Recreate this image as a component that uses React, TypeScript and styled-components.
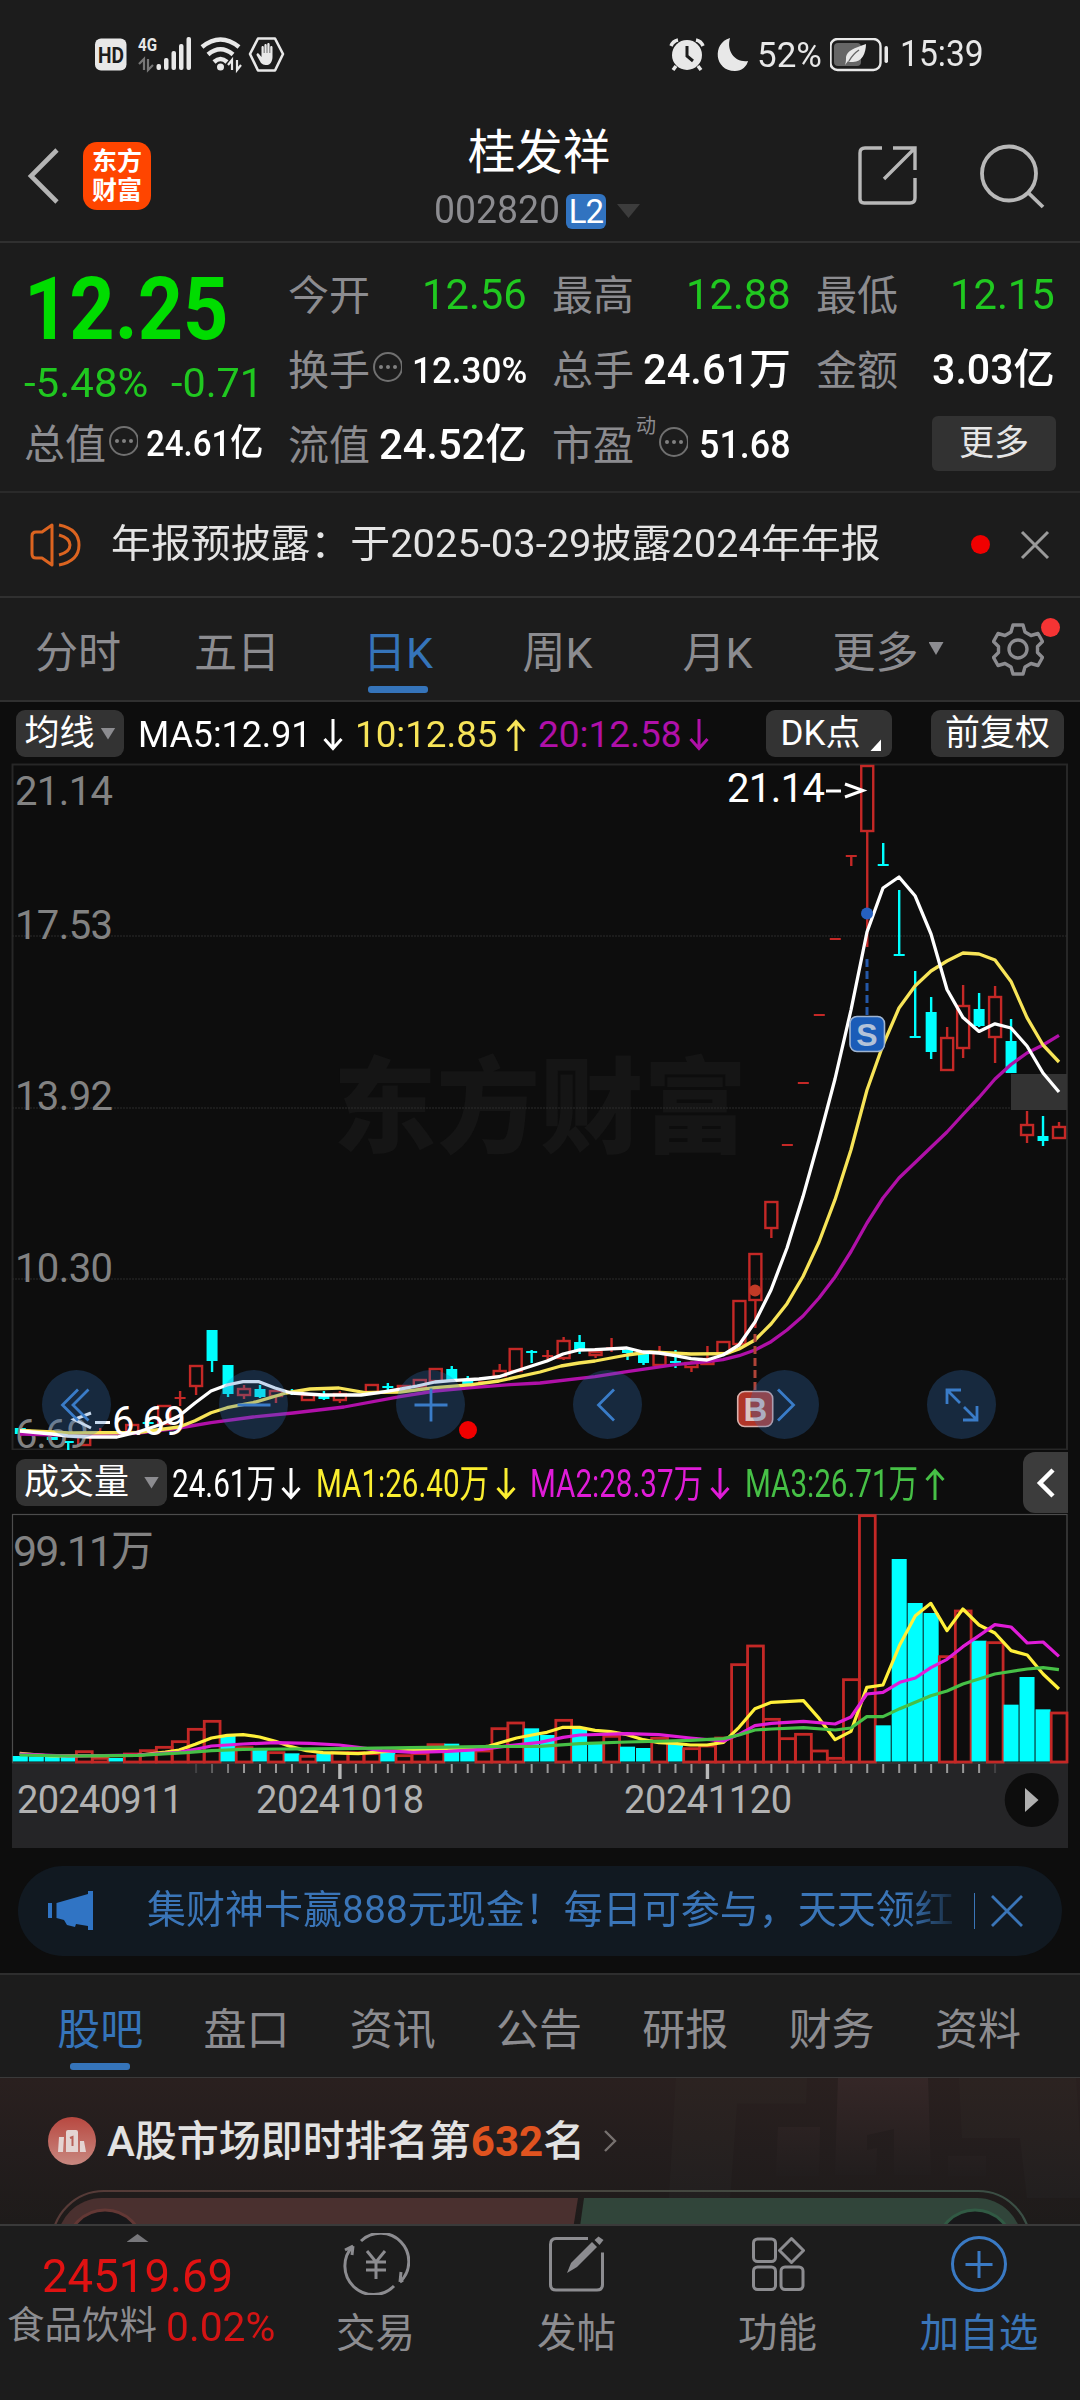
import React, { useLayoutEffect, useRef, useState } from "react";
import styled, { createGlobalStyle } from "styled-components";

const GlobalStyle = createGlobalStyle`
  * { box-sizing: border-box; }
  body {
    margin: 0;
    background: #1c1c1c;
    font-family: Roboto, "Noto Sans CJK SC", sans-serif;
    color: #fff;
  }
  svg { display: block; flex: none; }
`;

const GRAY = "#8c8c90";
const BLUE = "#3574ba";
const RED = "#c42826";
const CYAN = "#00ffff";

/* ---------- shared text ---------- */

const FitBox = styled.span<{ $w: number; $size: number; $color: string; $weight: number }>`
  display: block;
  flex: none;
  width: ${(p) => p.$w}px;
  font-size: ${(p) => p.$size}px;
  line-height: 1.15;
  color: ${(p) => p.$color};
  font-weight: ${(p) => p.$weight};
  white-space: nowrap;
`;
const FitInner = styled.span`
  display: inline-block;
  transform-origin: left center;
`;

function Fit({ w, size, color = "#fff", weight = 400, children }: {
  w: number; size: number; color?: string; weight?: number; children: React.ReactNode;
}) {
  const ref = useRef<HTMLSpanElement>(null);
  const [scale, setScale] = useState(1);
  useLayoutEffect(() => {
    if (ref.current) setScale(w / ref.current.offsetWidth);
  }, [w]);
  return (
    <FitBox $w={w} $size={size} $color={color} $weight={weight}>
      <FitInner ref={ref} style={{ transform: `scaleX(${scale})` }}>{children}</FitInner>
    </FitBox>
  );
}

const Triangle = styled.i<{ $w: number; $h: number; $color: string; $up?: boolean }>`
  width: ${(p) => p.$w}px;
  height: ${(p) => p.$h}px;
  flex: none;
  background: ${(p) => p.$color};
  clip-path: ${(p) => (p.$up ? "polygon(0 100%, 100% 100%, 50% 0)" : "polygon(0 0, 100% 0, 50% 100%)")};
`;

/* ---------- page ---------- */

const Page = styled.div`
  width: 1080px;
  height: 2400px;
  display: flex;
  flex-direction: column;
  overflow: hidden;
  background: #1c1c1c;
`;

/* ---------- status bar ---------- */

const StatusBar = styled.div`
  height: 111px;
  display: flex;
  justify-content: space-between;
  padding: 0 96px 1px 94px;
`;
const StatusGroup = styled.div`
  display: flex;
  align-items: center;
  gap: 8px;
`;
const Clock = styled.div`
  margin-left: 3px;
`;

/* ---------- header ---------- */

const Header = styled.header`
  height: 132px;
  display: grid;
  grid-template-columns: 434px 210px 1fr;
  border-bottom: 2px solid #303030;
`;
const HeaderLeft = styled.div`
  display: flex;
  align-items: center;
  padding: 0 0 1px 25px;
  gap: 23px;
`;
const Logo = styled.div`
  width: 68px;
  height: 68px;
  border-radius: 14px;
  background: #ff4500;
  display: flex;
  flex-direction: column;
  align-items: center;
  justify-content: center;
  font-size: 25px;
  line-height: 29px;
  font-weight: 700;
`;
const HeaderTitle = styled.div`
  display: flex;
  flex-direction: column;
  align-items: center;
  padding-top: 13px;
`;
const StockName = styled.div`
  font-size: 47.5px;
  line-height: 58px;
`;
const CodeRow = styled.div`
  display: flex;
  align-items: center;
  width: 210px;
  height: 48px;
  margin-top: 5px;
`;
const LevelBadge = styled.span`
  width: 40px;
  height: 35px;
  margin: 0 11px 0 6px;
  border-radius: 6px;
  background: #3173c0;
  font-size: 33px;
  line-height: 36px;
  text-align: center;
  letter-spacing: -1px;
`;
const HeaderRight = styled.div`
  display: flex;
  align-items: center;
  justify-content: flex-end;
  padding: 0 35px 1px 0;
  gap: 62px;
`;

/* ---------- quote ---------- */

const Quote = styled.section`
  height: 250px;
  display: grid;
  grid-template-columns: repeat(4, 239px);
  column-gap: 25px;
  padding: 15px 23px 0 24px;
  border-bottom: 2px solid #2a2a2a;
`;
const QuoteColumn = styled.div`
  display: flex;
  flex-direction: column;
`;
const QuoteCell = styled.div<{ $h?: number }>`
  height: ${(p) => p.$h ?? 75}px;
  display: flex;
  align-items: center;
  justify-content: space-between;
`;
const LabelBox = styled.div`
  display: flex;
  align-items: center;
  font-size: 41px;
  line-height: 48px;
  color: ${GRAY};
`;
const Sup = styled.sup`
  align-self: flex-start;
  margin-top: -6px;
  margin-left: 2px;
  font-size: 20px;
  line-height: 20px;
`;
const MoreButton = styled.div`
  width: 124px;
  height: 55px;
  margin: -5px -1px 0 auto;
  border-radius: 6px;
  background: #323232;
  color: #e6e6e6;
  font-size: 35px;
  line-height: 55px;
  text-align: center;
`;

function Dots() {
  return (
    <svg width="32" height="38" viewBox="0 0 32 38">
      <circle cx="18" cy="15" r="14" fill="none" stroke="#707070" strokeWidth="2" />
      {[11, 18, 25].map((x) => <circle key={x} cx={x} cy="15" r="2" fill="#808080" />)}
    </svg>
  );
}

function Cell({ label, value, w, size = 42.5, color = "#fff", weight = 500, dots, sup }: {
  label: string; value: string; w: number; size?: number; color?: string; weight?: number; dots?: boolean; sup?: string;
}) {
  return (
    <QuoteCell>
      <LabelBox>{label}{sup && <Sup>{sup}</Sup>}{dots && <Dots />}</LabelBox>
      <Fit w={w} size={size} color={color} weight={weight}>{value}</Fit>
    </QuoteCell>
  );
}

/* ---------- notice ---------- */

const Notice = styled.section`
  height: 105px;
  display: flex;
  align-items: center;
  padding: 0 30px 0 30px;
  border-bottom: 2px solid #303030;
`;
const NoticeText = styled.div`
  margin: 0 auto 0 30px;
`;
const CloseIcon = styled.svg<{ $gap: number }>`
  margin-left: ${(p) => p.$gap}px;
`;
const Dot = styled.i<{ $size: number; $color: string }>`
  width: ${(p) => p.$size}px;
  height: ${(p) => p.$size}px;
  border-radius: 50%;
  background: ${(p) => p.$color};
`;

/* ---------- tab bars ---------- */

const PeriodTabs = styled.nav`
  height: 104px;
  display: flex;
  align-items: center;
  border-bottom: 2px solid #303030;
`;
const Tab = styled.div<{ $w: number; $active?: boolean; $gap?: number }>`
  position: relative;
  width: ${(p) => p.$w}px;
  height: 100%;
  display: flex;
  align-items: center;
  justify-content: center;
  gap: ${(p) => p.$gap ?? 9}px;
  font-size: 43px;
  color: ${(p) => (p.$active ? BLUE : GRAY)};
  padding-bottom: 1px;
  &::after {
    content: "";
    display: ${(p) => (p.$active ? "block" : "none")};
    position: absolute;
    left: calc(50% - 30px);
    bottom: 7px;
    width: 60px;
    height: 7px;
    border-radius: 3px;
    background: ${BLUE};
  }
`;
const GearBox = styled.div`
  position: relative;
  margin-left: 14px;
`;
const GearDot = styled(Dot)`
  position: absolute;
  right: -16px;
  top: -4px;
`;

/* ---------- chart area ---------- */

const ChartArea = styled.section`
  height: 1271px;
  background: #0d0d0d;
  display: flex;
  flex-direction: column;
`;
const IndicatorRow = styled.div`
  height: 61px;
  display: flex;
  align-items: center;
  padding: 2px 16px 0 16px;
`;
const Chip = styled.div<{ $w: number; $gap?: number; $left?: number }>`
  width: ${(p) => p.$w}px;
  height: 47px;
  flex: none;
  margin-left: ${(p) => p.$left ?? 0}px;
  display: flex;
  align-items: center;
  justify-content: center;
  gap: ${(p) => p.$gap ?? 6}px;
  border-radius: 9px;
  background: #333;
  font-size: 35px;
  line-height: 48px;
  white-space: nowrap;
`;
const Corner = styled.i`
  align-self: flex-end;
  width: 11px;
  height: 12px;
  margin: 0 -4px 6px 0;
  background: #fff;
  clip-path: polygon(100% 0, 100% 100%, 0 100%);
`;
const Readings = styled.div<{ $pad: number; $gap: number }>`
  display: flex;
  align-items: center;
  padding: 3px 0 0 ${(p) => p.$pad}px;
  gap: ${(p) => p.$gap}px;
  flex: 1;
`;
const Reading = styled.div<{ $gap: number }>`
  display: flex;
  align-items: center;
  gap: ${(p) => p.$gap}px;
`;
const VolumeRow = styled.div`
  height: 63px;
  display: flex;
  align-items: center;
  padding: 2px 12px 0 16px;
`;
const SideHandle = styled.div`
  width: 45px;
  height: 61px;
  border-radius: 12px 0 0 12px;
  background: #3c3c3c;
  display: flex;
  align-items: center;
  justify-content: center;
`;
const MainChart = styled.div`
  position: relative;
  height: 687px;
`;
const ChartButtons = styled.div`
  position: absolute;
  left: 42px;
  bottom: 11px;
  display: flex;
  gap: 108px;
`;
const RoundButton = styled.div`
  width: 69px;
  height: 69px;
  border-radius: 50%;
  background: rgba(52, 116, 190, 0.28);
  display: flex;
  align-items: center;
  justify-content: center;
`;
const AxisStrip = styled.div`
  height: 84px;
  margin: 0 12px;
  background: #252527;
`;

function Arrow({ up, color }: { up?: boolean; color: string }) {
  return (
    <svg width="20" height="32" viewBox="0 0 20 32" fill="none" stroke={color} strokeWidth="3">
      <path d={up ? "M10 32V3M1.5 12L10 2.5l8.500 9.500" : "M10 0v29M1.500 20l8.500 9.500 8.500-9.500"} />
    </svg>
  );
}

const buttonGlyphs = [
  "M18 1.500L2.500 17 18 32.500M28.500 1.500L13 17l15.500 15.500",
  "M.5 17h33",
  "M.5 17h33M17 .5v33",
  "M23 1.500L7.500 17 23 32.500",
  "M10 1.500L25.500 17 10 32.500",
  "M16 2H2v14M2 2l13 13M18 32h14V18M32 32L19 19",
];

const X0 = 20.3;
const STEP = 15.98;
const cx = (i: number) => X0 + STEP * i;

/* [direction, body top, body bottom, high, low]; direction 1 = rise, 0 = fall */
const candles: number[][] = [
  [0, 1428, 1434, 1428, 1434], [0, 1431, 1434, 1430, 1435], [0, 1437, 1440, 1437, 1440], [0, 1441, 1443, 1441, 1451],
  [1, 1435, 1445, 1435, 1445], [1, 1431, 1432, 1428, 1434], [0, 1431, 1433, 1431, 1433], [1, 1425, 1432, 1425, 1432],
  [0, 1422, 1424, 1417, 1426], [1, 1406, 1424, 1406, 1424], [1, 1397, 1398, 1391, 1406], [1, 1366, 1386, 1365, 1395],
  [0, 1330, 1361, 1330, 1372], [0, 1365, 1394, 1365, 1397], [1, 1389, 1395, 1385, 1399], [0, 1389, 1397, 1385, 1398],
  [1, 1391, 1396, 1391, 1403], [0, 1392, 1394, 1389, 1395], [1, 1395, 1400, 1395, 1401], [0, 1395, 1399, 1391, 1400],
  [1, 1394, 1400, 1391, 1403], [1, 1394, 1395, 1394, 1395], [1, 1385, 1392, 1385, 1392], [0, 1386, 1388, 1383, 1390],
  [1, 1386, 1390, 1386, 1390], [1, 1380, 1387, 1380, 1387], [1, 1369, 1381, 1369, 1381], [0, 1369, 1381, 1366, 1381],
  [0, 1381, 1384, 1376, 1386], [1, 1381, 1382, 1381, 1382], [1, 1371, 1376, 1364, 1376], [1, 1349, 1371, 1349, 1371],
  [0, 1351, 1353, 1350, 1363], [1, 1355, 1356, 1350, 1360], [1, 1341, 1358, 1337, 1360], [0, 1342, 1350, 1335, 1354],
  [1, 1352, 1355, 1348, 1358], [1, 1347, 1348, 1338, 1352], [0, 1350, 1353, 1347, 1360], [0, 1354, 1363, 1351, 1365],
  [1, 1353, 1365, 1346, 1365], [0, 1361, 1363, 1350, 1368], [1, 1363, 1367, 1361, 1372], [1, 1359, 1364, 1346, 1364],
  [1, 1342, 1353, 1342, 1353], [1, 1301, 1344, 1301, 1344], [1, 1254, 1300, 1254, 1328], [1, 1202, 1228, 1202, 1238],
  [1, 1144, 1146, 1146, 1146], [1, 1082, 1084, 1082, 1084], [1, 1014, 1016, 1014, 1016], [1, 938, 940, 940, 940],
  [1, 855, 857, 857, 866], [1, 766, 831, 766, 947], [0, 864, 866, 843, 866], [0, 954, 956, 890, 956],
  [0, 1036, 1038, 971, 1038], [0, 1012, 1052, 997, 1059], [1, 1038, 1070, 1027, 1070], [1, 1006, 1048, 985, 1058],
  [0, 1009, 1026, 993, 1027], [1, 997, 1037, 986, 1063], [0, 1041, 1073, 1019, 1073], [1, 1125, 1135, 1111, 1143],
  [0, 1136, 1141, 1116, 1146], [1, 1127, 1138, 1122, 1139],
];

const ma5 = "20,1431 52,1434 68,1436 90,1437 117,1437 138,1432 162,1424 179,1416 195,1403 211,1391 227,1385 243,1381.700 259,1381.700 275,1388 291,1393 323,1395 361,1395 379,1392.700 400,1389 417,1386 435,1382 451,1380.700 479,1379 499,1376.700 516,1371 547,1361 563,1354 579,1350 595,1349.700 627,1348 643,1352 659,1353 675,1355.700 691,1358.700 707,1360 723,1355 739,1345 755,1322 771,1290 787,1248 803,1196.600 819,1139.500 835,1079 851,1010 867,932 883,888 899,877 915,895.700 931,934 947,989.500 963,1017.600 979,1031.400 995,1023.800 1011,1028 1027,1046 1043,1073 1059,1092";
const ma10 = "20,1430.500 52,1432 69,1433 138,1432.500 179,1427 195,1420.700 211,1412.700 227,1407.700 253,1402.700 286,1393 310,1389 339,1388 365,1392.700 400,1392 435,1387.700 472,1384.700 499,1381 540,1372 561,1366 579,1363 595,1361 627,1355 650,1352 691,1354 726,1353.700 739,1349 755,1340 771,1324 787,1303.700 803,1276.500 819,1242 835,1199.700 851,1149.700 867,1090 883,1045 899,1008 915,986 931,971 947,961 963,953 979,954 995,960 1011,981.400 1027,1017.600 1043,1045 1059,1062";
const ma20 = "20,1434 69,1435.300 138,1433 179,1428 211,1422.700 253,1417 293,1413 344,1407 400,1396.700 435,1391 472,1387.700 510,1384.700 540,1383 595,1376.700 627,1371.700 675,1364.700 707,1361.700 723,1359.700 739,1355.700 755,1350 771,1341.700 787,1330 803,1316 819,1298 835,1277 851,1251.500 867,1223 883,1198 899,1178 947,1132 963,1114.500 979,1097.500 995,1079 1011,1064.500 1027,1053 1043,1045 1059,1035.400";

function Candle({ i, d }: { i: number; d: number[] }) {
  const [up, t, b, hi, lo] = d;
  const x = cx(i);
  const color = up ? RED : CYAN;
  return (
    <g stroke={color} strokeWidth="2.400" fill="none">
      {hi < t && <path d={`M${x} ${hi}V${t}`} />}
      {lo > b && <path d={`M${x} ${b}V${lo}`} />}
      {up && b - t > 2
        ? <rect x={x - 6} y={t} width="12" height={b - t} />
        : <rect x={x - 5.500} y={t} width="11" height={Math.max(b - t, 2)} fill={color} stroke="none" />}
    </g>
  );
}

function PriceChart() {
  return (
    <svg width="1080" height="687" viewBox="0 763 1080 687">
      <text x="333" y="1145" textLength="414" lengthAdjust="spacingAndGlyphs" fontSize="104" fontWeight="900" fill="#151515">东方财富</text>
      <rect x="12.500" y="764.500" width="1054.500" height="685" fill="none" stroke="#272727" strokeWidth="2" />
      {[936, 1108, 1279].map((y) => (
        <path key={y} d={`M12 ${y}H1067`} stroke="#2c2c2c" strokeDasharray="2 1" />
      ))}
      {candles.map((d, i) => <Candle key={i} i={i} d={d} />)}
      <g fill="#828282" fontSize="40">
        <text x="15" y="804.500" textLength="98">21.14</text>
        <text x="15" y="938.500" textLength="98">17.53</text>
        <text x="15" y="1109.500" textLength="98">13.92</text>
        <text x="15" y="1281.500" textLength="98">10.30</text>
        <text x="15" y="1447.500" textLength="74">6.69</text>
      </g>
      <rect x="1011" y="1074" width="56" height="36" fill="#333" />
      <g fill="none" strokeWidth="3.300" strokeLinejoin="round">
        <polyline points={ma20} stroke="#b010a8" />
        <polyline points={ma10} stroke="#f7e458" />
        <polyline points={ma5} stroke="#fff" />
      </g>
      <circle cx="867" cy="913.500" r="6" fill="#2560c0" />
      <path d="M867 959V1016" stroke="#2458a8" strokeWidth="3" strokeDasharray="8 4" />
      <rect x="850" y="1016.500" width="34.500" height="35" rx="7" fill="#1a5cb8" stroke="#9fb4d0" strokeWidth="1.600" />
      <text x="867" y="1045.500" textAnchor="middle" fontFamily="Liberation Sans" fontWeight="700" fontSize="32" fill="#b3c2d8">S</text>
      <circle cx="755" cy="1290.500" r="6" fill="#c23a26" />
      <path d="M755 1334V1391" stroke="#b04438" strokeWidth="3" strokeDasharray="8 4" />
      <rect x="737.700" y="1391.500" width="35" height="35" rx="7" fill="#b03528" stroke="#d8b0ac" strokeWidth="1.600" />
      <text x="755.500" y="1421" textAnchor="middle" fontFamily="Liberation Sans" fontWeight="700" fontSize="33" fill="#dcc4c2">B</text>
      <circle cx="468" cy="1430" r="9" fill="#f00000" />
      <g fill="#fff" fontSize="40">
        <text x="727" y="802" textLength="98">21.14</text>
        <text x="112" y="1434.500" textLength="74">6.69</text>
      </g>
      <path d="M826 791h15M845 784l18 6.500-18 6.500M91 1413l-17 6.500 17 8.500M95 1422.500h15" stroke="#fff" strokeWidth="3" fill="none" />
    </svg>
  );
}

const volumeTops = [
  768, 769, 768, 768, 752, 772, 774, 759, 749, 739, 722, 685, 661, 708, 740, 748, 755, 760, 766, 760, 755, 755, 758, 758, 764, 758,
  731, 731, 745, 750, 683, 666, 685, 705, 658, 685, 728, 706, 740, 744, 712, 730, 743, 735, 711, 491, 435, 655, 713, 700, 750, 772,
  536, 44, 676, 177, 309, 339, 467, 330, 422, 425, 614, 531, 628, 636,
];
const fallingVolume = new Set([0, 1, 2, 3, 6, 13, 15, 17, 19, 23, 27, 28, 32, 33, 35, 36, 38, 39, 41, 54, 55, 56, 57, 60, 62, 63, 64]);

const L = (pts: number[][], off = 0) => pts.map(([x, y]) => `${x / 2.904 + off},${y / 3 + 1500}`).join(" ");
const vma1 = L([[57, 760], [150, 768], [400, 766], [480, 756], [520, 750], [567, 733], [614, 714], [660, 706], [706, 704], [754, 711], [800, 724], [845, 740], [890, 752], [938, 758], [1040, 761], [1124, 754], [1265, 749], [1355, 747], [1420, 738], [1500, 714], [1560, 702]])
  + " " + L([[20, 697], [67, 682], [115, 682], [160, 691], [205, 695], [253, 704], [300, 719], [345, 728], [392, 730], [437, 735], [485, 735], [533, 727], [578, 682], [624, 626], [672, 607], [765, 602], [811, 656], [857, 719], [903, 694], [949, 562], [996, 555], [1045, 434], [1090, 347], [1135, 310], [1182, 392], [1228, 327], [1275, 375], [1321, 399], [1368, 452], [1415, 465], [1461, 522], [1507, 567]], 540);
const vma2 = L([[57, 762], [200, 768], [400, 765], [520, 757], [567, 748], [614, 738], [706, 732], [800, 728], [900, 730], [985, 735], [1040, 742], [1110, 752], [1200, 757], [1300, 754], [1400, 748], [1480, 737]])
  + " " + L([[0, 727], [67, 712], [115, 705], [253, 701], [345, 704], [437, 714], [533, 723], [578, 703], [624, 677], [672, 670], [765, 664], [857, 672], [903, 651], [949, 582], [996, 577], [1045, 547], [1090, 534], [1135, 503], [1182, 478], [1228, 440], [1275, 407], [1321, 374], [1368, 381], [1415, 429], [1461, 426], [1507, 469]], 540);
const vma3 = L([[57, 765], [200, 768], [400, 766], [540, 758], [614, 752], [706, 748], [985, 746], [1400, 740]])
  + " " + L([[0, 739], [115, 731], [253, 726], [437, 721], [533, 716], [578, 705], [624, 690], [672, 687], [765, 683], [857, 690], [903, 684], [949, 650], [996, 650], [1045, 626], [1135, 587], [1182, 573], [1228, 552], [1321, 522], [1415, 507], [1461, 503], [1507, 509]], 540);

function VolumeChart() {
  return (
    <svg width="1080" height="251" viewBox="0 1513 1080 251">
      <rect x="12.500" y="1514.500" width="1054.500" height="248.500" fill="none" stroke="#4c4c4c" strokeWidth="1.200" />
      {volumeTops.map((v, i) => {
        const y = v / 3 + 1500;
        return fallingVolume.has(i)
          ? <rect key={i} x={cx(i) - 7.500} y={y} width="15" height={1761.500 - y} fill={CYAN} />
          : <rect key={i} x={cx(i) - 7.800} y={y + 1} width="15.800" height={1761 - y} fill="none" stroke={RED} strokeWidth="2.800" />;
      })}
      <text x="13" y="1565.500" fontSize="43" textLength="141" fill="#828282">99.11万</text>
      <g fill="none" strokeWidth="3.200" strokeLinejoin="round">
        <polyline points={vma1} stroke="#fff03a" />
        <polyline points={vma2} stroke="#e01cd8" />
        <polyline points={vma3} stroke="#46c046" />
      </g>
    </svg>
  );
}

function TimeAxis() {
  const ticks = Array.from({ length: 51 }, (_, n) => n);
  return (
    <svg width="1056" height="84" viewBox="12 1764 1056 84">
      {ticks.map((n) => {
        const major = n === 9 || n === 32;
        const fade = n === 0 || n === 50 ? 0.25 : n === 1 ? 0.5 : n === 2 ? 0.75 : 1;
        return <rect key={n} x={cx(n + 11) - (major ? 1.700 : 1)} y="1764" width={major ? 3.400 : 2} height={major ? 15 : 9} fill={major ? "#b8b8b8" : "#999"} opacity={fade} />;
      })}
      <g fill="#b2b2b2" fontSize="38">
        <text x="17" y="1813" textLength="166">20240911</text>
        <text x="256" y="1813" textLength="168">20241018</text>
        <text x="624" y="1813" textLength="168">20241120</text>
      </g>
      <circle cx="1031.700" cy="1800" r="27" fill="#0d0d0d" />
      <path d="M1025 1788v24l13.500-12z" fill="#b0b0b0" />
    </svg>
  );
}

/* ---------- banner ---------- */

const Banner = styled.div`
  height: 90px;
  margin: 18px 18px 0;
  border-radius: 45px;
  background: #111921;
  display: flex;
  align-items: center;
  padding: 0 38px 0 30px;
`;
const BannerText = styled.div`
  width: 809px;
  height: 58px;
  margin: 0 19px 0 53px;
  white-space: nowrap;
  font-size: 39px;
  line-height: 57px;
  color: #3a75b8;
  mask-image: linear-gradient(90deg, #000 94%, transparent 101%);
`;
const BannerRule = styled.i`
  width: 1px;
  height: 36px;
  background: #3a75b8;
`;

/* ---------- section tabs ---------- */

const SectionTabs = styled.nav`
  height: 105px;
  display: flex;
  padding-left: 27px;
  border-top: 2px solid #2e2e2e;
  border-bottom: 1px solid #3a3a3a;
`;

/* ---------- ranking ---------- */

const Ranking = styled.section`
  position: relative;
  height: 146px;
  overflow: hidden;
  background: linear-gradient(#2a201f, #231d1d 50%, #1e1b1a);
`;
const RankArt = styled.svg`
  position: absolute;
  left: 0;
  top: 0;
`;
const RankTitle = styled.div`
  position: relative;
  display: flex;
  align-items: center;
  height: 126px;
  padding-left: 48px;
  font-size: 42px;
  line-height: 50px;
  font-weight: 500;
  color: #e2e2e2;
`;
const RankWords = styled.span`
  margin: 2px 18px 0 11px;
  b { color: #e0531f; font-weight: 700; }
`;

/* ---------- bottom bar ---------- */

const BottomBar = styled.footer`
  flex: 1;
  display: grid;
  grid-template-columns: 275px 201px 201px 201px 202px;
  border-top: 2px solid #3a3a3a;
`;
const IndexBox = styled.div`
  display: flex;
  flex-direction: column;
  align-items: center;
  padding-top: 8px;
`;
const IndexValue = styled.div`
  height: 54px;
  margin-top: 8px;
`;
const IndexLine = styled.div`
  width: 275px;
  padding-left: 7px;
  display: flex;
  align-items: center;
  justify-content: space-between;
  height: 52px;
  margin-top: -3px;
`;
const IndexName = styled.span`
  margin-bottom: 5px;
  font-size: 37.500px;
  line-height: 46px;
  color: ${GRAY};
`;
const Action = styled.div<{ $color?: string }>`
  display: flex;
  flex-direction: column;
  align-items: center;
  padding-top: 7px;
  font-size: 39.500px;
  line-height: 48px;
  color: ${(p) => p.$color ?? GRAY};
  svg { margin-bottom: 15px; }
`;

export default function App() {
  return (
    <>
      <GlobalStyle />
      <Page>
        <StatusBar>
          <StatusGroup>
            <svg width="192" height="40" viewBox="95 35 192 40">
              <rect x="96" y="38.500" width="31.500" height="32" rx="6" fill="#e8e8e8" />
              <text x="99" y="63" fontSize="22" fontWeight="700" fill="#1c1c1c" textLength="26" lengthAdjust="spacingAndGlyphs">HD</text>
              <text x="139" y="51" fontSize="19" fontWeight="700" fill="#e8e8e8" textLength="19" lengthAdjust="spacingAndGlyphs">4G</text>
              <path d="M145 70V59l-5 5M149 59v11l5-5" stroke="#777" strokeWidth="2.200" fill="none" />
              <g fill="#e8e8e8">
                <rect x="157.500" y="64" width="4.500" height="6" rx="2" />
                <rect x="165" y="58" width="4.500" height="12" rx="2" />
                <rect x="172.500" y="51" width="4.500" height="19" rx="2" />
                <rect x="180" y="44" width="4.500" height="26" rx="2" />
                <rect x="187.500" y="37" width="4.500" height="33" rx="2" />
              </g>
              <g fill="none" stroke="#e8e8e8" strokeWidth="4.500">
                <path d="M203 47q18.500-15 37 0" />
                <path d="M209 54.500q12.500-10.500 25 0" />
                <path d="M215 62q6.500-6 13 0" />
              </g>
              <circle cx="221.500" cy="67" r="3.500" fill="#e8e8e8" />
              <path d="M233 70V60l-4 5M238 60v10l4-5" stroke="#e8e8e8" strokeWidth="2.200" fill="none" />
              <path d="M259 38.500h17l8 15.500-8 16.500h-17L251 54z" fill="none" stroke="#e8e8e8" strokeWidth="2.600" strokeLinejoin="round" />
              <path d="M262 63l-4.500-8c0-2 2-2 2.500-1l2.500 3V47c0-1.500 2.300-1.500 2.300 0v6h.6v-8c0-1.500 2.300-1.500 2.300 0v8h.6v-9c0-1.500 2.300-1.500 2.300 0v9h.6v-6c0-1.500 2.300-1.500 2.300 0v10c0 5-3 8-5 8h-2c-2 0-3-1-4.500-2z" fill="#e8e8e8" />
            </svg>
          </StatusGroup>
          <StatusGroup>
            <svg width="82" height="40" viewBox="666 35 82 40">
              <circle cx="686" cy="55" r="15" fill="#e8e8e8" />
              <path d="M686 46v10l6 5" stroke="#1c1c1c" strokeWidth="3" fill="none" />
              <path d="M670 46q2-5 7-6M702 46q-2-5-7-6M675 66l-3 4M697 66l3 4" stroke="#e8e8e8" strokeWidth="3.500" fill="none" />
              <path d="M729 38c-18 5-16 33 5 33 7 0 12-5 13-10-12 2-22-9-18-23z" fill="#e8e8e8" />
            </svg>
            <Fit w={65} size={35.500} color="#e8e8e8">52%</Fit>
            <svg width="59" height="34" viewBox="828 38 59 34">
              <rect x="828.500" y="39" width="50" height="31" rx="7" fill="none" stroke="#e8e8e8" strokeWidth="2.400" />
              <rect x="832" y="43" width="27" height="23" rx="4" fill="#666" />
              <path d="M843 65c1-3 1-5 1-8 1-6 8-9 20-13 0 9-4 18-13 18-2 0-4 0-5-1z" fill="#e8e8e8" />
              <path d="M847 61q4-7 10-11" stroke="#666" strokeWidth="1.500" fill="none" />
              <rect x="882.500" y="46" width="3.500" height="17" rx="1.700" fill="#e8e8e8" />
            </svg>
            <Clock><Fit w={84} size={36} color="#e8e8e8">15:39</Fit></Clock>
          </StatusGroup>
        </StatusBar>

        <Header>
          <HeaderLeft>
            <svg width="35" height="60" viewBox="0 0 35 60" fill="none" stroke="#b4b4b4" strokeWidth="4.600">
              <path d="M32 4L6 30l26 26" />
            </svg>
            <Logo><span>东方</span><span>财富</span></Logo>
          </HeaderLeft>
          <HeaderTitle>
            <StockName>桂发祥</StockName>
            <CodeRow>
              <Fit w={126} size={38} color={GRAY}>002820</Fit>
              <LevelBadge>L2</LevelBadge>
              <Triangle $w={23} $h={14} $color="#3c3c3c" />
            </CodeRow>
          </HeaderTitle>
          <HeaderRight>
            <svg width="60" height="62" viewBox="857 145 60 62" fill="none" stroke="#b8b8b8" strokeWidth="3.400">
              <path d="M882 148h-17q-5 0-5 5v46q0 4 4 4h46q5 0 5-5v-20M893 148h22v22M915 148l-31 31" />
            </svg>
            <svg width="66" height="66" viewBox="979 142 66 66" fill="none" stroke="#b8b8b8" strokeWidth="3.800">
              <circle cx="1009" cy="172.500" r="27" />
              <path d="M1028 191.500l15 14.500" />
            </svg>
          </HeaderRight>
        </Header>

        <Quote>
          <QuoteColumn>
            <QuoteCell $h={102}><Fit w={204} size={88} color="#00dc00" weight={700}>12.25</Fit></QuoteCell>
            <QuoteCell $h={47}>
              <Fit w={124} size={40} color="#20c820">-5.48%</Fit>
              <Fit w={92} size={40} color="#20c820">-0.71</Fit>
            </QuoteCell>
            <Cell label="总值" value="24.61亿" w={117} size={37} dots />
          </QuoteColumn>
          <QuoteColumn>
            <Cell label="今开" value="12.56" w={105} color="#20c820" weight={400} />
            <Cell label="换手" value="12.30%" w={115} size={37.500} dots />
            <Cell label="流值" value="24.52亿" w={148} />
          </QuoteColumn>
          <QuoteColumn>
            <Cell label="最高" value="12.88" w={105} color="#20c820" weight={400} />
            <Cell label="总手" value="24.61万" w={148} />
            <Cell label="市盈" value="51.68" w={92} size={39} dots sup="动" />
          </QuoteColumn>
          <QuoteColumn>
            <Cell label="最低" value="12.15" w={105} color="#20c820" weight={400} />
            <Cell label="金额" value="3.03亿" w={123} />
            <QuoteCell><MoreButton>更多</MoreButton></QuoteCell>
          </QuoteColumn>
        </Quote>

        <Notice>
          <svg width="51" height="46" viewBox="0 0 51 46" fill="none" stroke="#dc6420" strokeWidth="3" strokeLinejoin="round">
            <path d="M22 3v40L12 36H6q-4 0-4-4V14q0-4 4-4h6zM29 3q20 4 20 20t-20 20M29 13q11 3 11 10t-11 10" />
          </svg>
          <NoticeText><Fit w={770} size={39} color="#e4e4e4">年报预披露：于2025-03-29披露2024年年报</Fit></NoticeText>
          <Dot $size={19} $color="#f00000" />
          <CloseIcon $gap={30} width="30" height="30" viewBox="0 0 30 30" stroke="#9a9a9a" strokeWidth="3">
            <path d="M2 2l26 26M28 2L2 28" />
          </CloseIcon>
        </Notice>

        <PeriodTabs>
          <Tab $w={156}>分时</Tab>
          <Tab $w={162}>五日</Tab>
          <Tab $w={160} $active>日K</Tab>
          <Tab $w={159}>周K</Tab>
          <Tab $w={161}>月K</Tab>
          <Tab $w={180} $gap={10}>更多<Triangle $w={15} $h={13} $color={GRAY} /></Tab>
          <GearBox>
            <svg width="52" height="54" viewBox="0 0 52 54" fill="none" stroke={GRAY} strokeWidth="3.400" strokeLinejoin="round">
              <path d="M21 3h10l2 7 6 3.500 7-2 4.500 8-5 5v6l5 5-4.500 8-7-2-6 3.500-2 7H21l-2-7-6-3.500-7 2-4.500-8 5-5v-6l-5-5 4.500-8 7 2 6-3.500z" />
              <circle cx="26" cy="27" r="9" />
            </svg>
            <GearDot $size={19} $color="#f53434" />
          </GearBox>
        </PeriodTabs>

        <ChartArea>
          <IndicatorRow>
            <Chip $w={108}>均线<Triangle $w={15} $h={12} $color="#8c8c90" /></Chip>
            <Readings $pad={14} $gap={12}>
              <Reading $gap={12}><Fit w={173} size={37}>MA5:12.91</Fit><Arrow color="#fff" /></Reading>
              <Reading $gap={9}><Fit w={142} size={37} color="#f7e458">10:12.85</Fit><Arrow up color="#f7e458" /></Reading>
              <Reading $gap={8}><Fit w={143} size={37} color="#b010a8">20:12.58</Fit><Arrow color="#b010a8" /></Reading>
            </Readings>
            <Chip $w={126} $gap={10}>
              <span>DK点</span><Corner />
            </Chip>
            <Chip $w={133} $left={39}>前复权</Chip>
          </IndicatorRow>

          <MainChart>
            <PriceChart />
            <ChartButtons>
              {buttonGlyphs.map((d) => (
                <RoundButton key={d}>
                  <svg width="34" height="34" viewBox="0 0 34 34" fill="none" stroke="#3a7cc8" strokeWidth="2.800"><path d={d} /></svg>
                </RoundButton>
              ))}
            </ChartButtons>
          </MainChart>

          <VolumeRow>
            <Chip $w={151} $gap={15}>成交量<Triangle $w={15} $h={12} $color="#8c8c90" /></Chip>
            <Readings $pad={5} $gap={14.5}>
              <Reading $gap={5}><Fit w={104} size={38.500}>24.61万</Fit><Arrow color="#fff" /></Reading>
              <Reading $gap={7}><Fit w={173} size={38.500} color="#fbee30">MA1:26.40万</Fit><Arrow color="#fbee30" /></Reading>
              <Reading $gap={7}><Fit w={173} size={38.500} color="#e01cd8">MA2:28.37万</Fit><Arrow color="#e01cd8" /></Reading>
              <Reading $gap={7}><Fit w={173} size={38.500} color="#46c046">MA3:26.71万</Fit><Arrow up color="#46c046" /></Reading>
            </Readings>
            <SideHandle>
              <svg width="20" height="32" viewBox="0 0 20 32" fill="none" stroke="#fff" strokeWidth="4.500"><path d="M17 3L4 16l13 13" /></svg>
            </SideHandle>
          </VolumeRow>
          <VolumeChart />
          <AxisStrip><TimeAxis /></AxisStrip>

          <Banner>
            <svg width="46" height="40" viewBox="0 0 46 40" fill="#3074c4">
              <path d="M0 12h4v15H0zM8.500 12L40 3l0-3h5v39h-5v-4l-12-2-1 3-8-2-3-5-7.500-2z" />
            </svg>
            <BannerText>集财神卡赢888元现金！每日可参与，天天领红</BannerText>
            <BannerRule />
            <CloseIcon $gap={15} width="34" height="34" viewBox="0 0 34 34" stroke="#3a75b8" strokeWidth="2.800">
              <path d="M2 2l30 30M32 2L2 32" />
            </CloseIcon>
          </Banner>
        </ChartArea>

        <SectionTabs>
          {["股吧", "盘口", "资讯", "公告", "研报", "财务", "资料"].map((t, i) => (
            <Tab key={t} $w={146.300} $active={i === 0}>{t}</Tab>
          ))}
        </SectionTabs>

        <Ranking>
          <RankArt width="1080" height="146" viewBox="0 2078 1080 146">
            <defs>
              <linearGradient id="ring" x1="0" x2="1"><stop offset="0" stopColor="#573a37" /><stop offset="1" stopColor="#3a4f45" /></linearGradient>
              <linearGradient id="art" gradientUnits="userSpaceOnUse" x1="0" x2="0" y1="2078" y2="2198"><stop offset="0" stopColor="#2c2321" /><stop offset="1" stopColor="#221f1f" /></linearGradient>
              <linearGradient id="podium" gradientUnits="userSpaceOnUse" x1="0" x2="0" y1="2078" y2="2178"><stop offset="0" stopColor="#352727" /><stop offset="1" stopColor="#211d1d" /></linearGradient>
            </defs>
            <path d="M676 2078H807l-1 25.500h-69l-7 94.500h-61zM959 2078h117l4 60v60h-53l-7-60h-58z" fill="url(#art)" />
            <path d="M778 2127h42l-1 49h-43zM838 2078h90l3 97h-37v-46l-27 6v15l10-2-1 27h-41zM948 2156h38v20h-38z" fill="url(#podium)" />
            <rect x="52" y="2191" width="978" height="110" rx="52" fill="none" stroke="url(#ring)" strokeWidth="2.200" />
            <path d="M57 2243a45 45 0 0 1 45-45H578l-8 50H57z" fill="#4a302f" />
            <path d="M584 2198H977a45 45 0 0 1 45 45v5H577z" fill="#31453a" />
            <circle cx="105" cy="2248" r="38" fill="#18181a" stroke="#633835" strokeWidth="3" />
            <circle cx="975" cy="2248" r="38" fill="#18181a" stroke="#315a44" strokeWidth="3" />
          </RankArt>
          <RankTitle>
            <svg width="48" height="48" viewBox="0 0 48 48">
              <defs><linearGradient id="medal" x1="0" x2="0" y1="0" y2="1"><stop offset="0" stopColor="#b84840" /><stop offset="1" stopColor="#c88880" /></linearGradient></defs>
              <circle cx="24" cy="24" r="24" fill="url(#medal)" />
              <path d="M11 20h5l-1 15h-5zM18 15q0-2 2-2h8q2 0 2 2v20H18zM32 24h4l2 11h-6z" fill="#e4d4d2" />
              <path d="M22 21l2.500-1v9" stroke="#b86058" strokeWidth="2" fill="none" />
            </svg>
            <RankWords>A股市场即时排名第<b>632</b>名</RankWords>
            <svg width="14" height="24" viewBox="0 0 14 24" fill="none" stroke="#77716f" strokeWidth="2.400"><path d="M2 2l10 10L2 22" /></svg>
          </RankTitle>
        </Ranking>

        <BottomBar>
          <IndexBox>
            <Triangle $w={22} $h={8} $color="#77777b" $up />
            <IndexValue><Fit w={191} size={46.500} color="#e01212">24519.69</Fit></IndexValue>
            <IndexLine><IndexName>食品饮料</IndexName><Fit w={109} size={41.500} color="#d41414">0.02%</Fit></IndexLine>
          </IndexBox>
          <Action>
            <svg width="68" height="62" viewBox="341 2233 68 62" fill="none" stroke={GRAY} strokeWidth="3">
              <path d="M360 2241a27 27 0 0 1 39 41l3-2M399 2282l1-10M393 2286a27 27 0 0 1-41-40l-8 4M352 2246l-1 9" />
              <path d="M366 2251l9 11 9-11M375 2262v17M365 2262h20M365 2270h20" />
            </svg>
            交易
          </Action>
          <Action>
            <svg width="58" height="62" viewBox="549 2233 58 62" fill="none" stroke={GRAY} strokeWidth="3">
              <path d="M589 2238.500h-32q-5.500 0-5.500 6v40q0 5.500 5.500 5.500h41q5.500 0 5.500-5.500v-32" />
              <path d="M568 2273l4-10 21-21 5 5-20 20z" fill={GRAY} stroke="none" />
              <path d="M595.500 2240l4-3.500 5 3.500-4 5z" fill={GRAY} stroke="none" />
            </svg>
            发帖
          </Action>
          <Action>
            <svg width="54" height="62" viewBox="751 2233 54 62" fill="none" stroke={GRAY} strokeWidth="3" strokeLinejoin="round">
              <rect x="753.500" y="2239" width="22" height="22.500" rx="4" />
              <rect x="753.500" y="2267" width="22" height="22.500" rx="4" />
              <rect x="781" y="2267" width="22" height="22.500" rx="4" />
              <path d="M791.500 2238.500l12 12-12 12-12-12z" />
            </svg>
            功能
          </Action>
          <Action $color="#3a75b8">
            <svg width="58" height="62" viewBox="950 2233 58 62" fill="none" stroke="#3a7ac4" strokeWidth="3">
              <circle cx="979" cy="2264" r="26.500" />
              <path d="M965.500 2264.500h27M979 2251v27" />
            </svg>
            加自选
          </Action>
        </BottomBar>
      </Page>
    </>
  );
}
